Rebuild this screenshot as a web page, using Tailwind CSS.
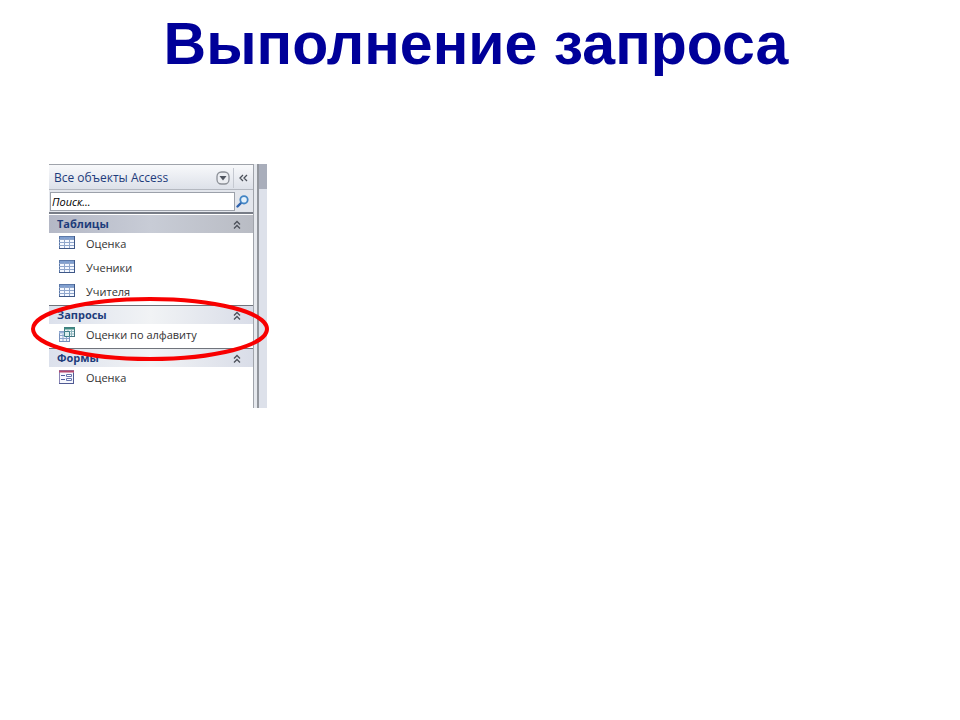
<!DOCTYPE html>
<html lang="ru">
<head>
  <meta charset="UTF-8" />
  <meta name="viewport" content="width=device-width, initial-scale=1.0" />
  <title>Выполнение запроса</title>
  <script src="https://cdn.jsdelivr.net/npm/@tailwindcss/browser@4"></script>
</head>
<body class="bg-white min-h-screen font-['Open_Sans','Noto_Sans',sans-serif]">

  <!-- Shared icons -->
  <svg class="hidden">
    <symbol id="chevrons" viewBox="0 0 8 9">
      <path d="M1 4.5 4 1.5l3 3M1 8.5l3-3 3 3" fill="none" stroke="#4b5059" stroke-width="1.3" />
    </symbol>
    <symbol id="table" viewBox="0 0 16 13">
      <rect x=".5" y=".5" width="15" height="12" fill="#f4f8ff" stroke="#5b78a8" />
      <rect x="1" y="1" width="14" height="2" fill="#7f9fd0" />
      <path d="M0 3.5h16M0 6.5h16M0 9.5h16M5.5 2v11M10.5 2v11" stroke="#8fa6cc" />
      <path d="M0 12.5h16M15.5 0v13" stroke="#3e5787" />
    </symbol>
  </svg>

  <h1 class="pt-2 pr-2 text-center text-[59px] leading-[72px] font-bold text-[#000099] font-['Liberation_Sans',sans-serif]">Выполнение запроса</h1>

  <main class="pt-[84px] pl-[49px]">
    <div class="relative flex w-[218px]">

      <!-- Navigation pane -->
      <nav class="flex-1 pb-[17px] border-t border-r border-[#a0a4ab] text-[11px] text-[#333333]">
        <div class="flex items-center h-6 pt-0.5 pl-[5px] bg-linear-to-b from-[#f8f9fb] to-[#dde1e9]">
          <span class="flex-1 text-[12px] text-[#1e3c7b] whitespace-nowrap">Все объекты Access</span>
          <button aria-label="Список" class="mr-[3px]">
            <svg class="block w-[14px] h-[14px]" viewBox="0 0 14 14">
              <rect x="1" y="1" width="12" height="12" rx="4.5" fill="#eceef2" stroke="#8c9097" stroke-width="1.3" />
              <path d="M3.5 5h7L7 9.5z" fill="#50555f" />
            </svg>
          </button>
          <button aria-label="Свернуть" class="flex items-center justify-center w-5 h-5 border-l border-[#c5c9d1]">
            <svg class="block w-[9px] h-[8px]" viewBox="0 0 9 8">
              <path d="M4 1 1 4l3 3M8 1 5 4l3 3" fill="none" stroke="#4b5059" stroke-width="1.3" />
            </svg>
          </button>
        </div>

        <form class="flex items-center h-[25px] pl-px bg-[#e3e6ec] border-t border-[#b4b8c0] border-b-2 border-b-[#787d87]">
          <input type="text" aria-label="Поиск" placeholder="Поиск..." class="flex-1 min-w-0 h-[19px] px-px bg-white border border-[#9ca1aa] italic placeholder:text-black" />
          <button type="button" aria-label="Найти" class="w-[18px] pl-px">
            <svg class="block w-[13px] h-[13px]" viewBox="0 0 13 13">
              <path d="M5 8 1.5 11.5" stroke="#2f62ad" stroke-width="2.4" stroke-linecap="round" />
              <circle cx="8" cy="4.8" r="3.7" fill="#e4f1fb" stroke="#4385c4" stroke-width="1.8" />
            </svg>
          </button>
        </form>

        <section>
          <h2 class="flex items-center justify-between h-[18px] mt-px pl-2 pr-3 font-bold text-[#1e3c7b] bg-linear-to-r from-[#b4b8c6] via-[#c8ccd6] to-[#b9bcc4]">Таблицы
            <svg class="w-2 h-[9px]"><use href="#chevrons" /></svg>
          </h2>
          <ul>
            <li><a href="#" class="flex items-center h-6 pb-0.5 pl-[10px] gap-[11px]"><svg class="w-4 h-[13px] mb-1"><use href="#table" /></svg>Оценка</a></li>
            <li><a href="#" class="flex items-center h-6 pb-0.5 pl-[10px] gap-[11px]"><svg class="w-4 h-[13px] mb-1"><use href="#table" /></svg>Ученики</a></li>
            <li><a href="#" class="flex items-center h-6 pb-0.5 pl-[10px] gap-[11px]"><svg class="w-4 h-[13px] mb-1"><use href="#table" /></svg>Учителя</a></li>
          </ul>
        </section>

        <section>
          <h2 class="flex items-center justify-between h-[19px] pl-2 pr-3 font-bold text-[#1e3c7b] border-t border-[#70747c] bg-linear-to-r from-[#dce1ec] via-[#f1f3f5] to-[#d9dde8]">Запросы
            <svg class="w-2 h-[9px]"><use href="#chevrons" /></svg>
          </h2>
          <a href="#" class="flex items-center h-6 pb-0.5 pl-[10px] gap-[11px]">
            <svg class="w-4 h-[15px] mb-0.5" viewBox="0 0 16 15">
              <rect x="5.5" y=".5" width="10" height="9" fill="#f2f8fa" stroke="#42747f" />
              <path d="M5 1.5h11" stroke="#3f8b82" stroke-width="2" />
              <path d="M6 4.5h9M6 7h9M9 3v6M12.5 3v6" stroke="#8db5bd" />
              <rect x=".5" y="4.5" width="10" height="10" fill="#f1f5fc" stroke="#7590bd" />
              <path d="M0 5.5h11" stroke="#9db4d7" stroke-width="2" />
              <path d="M1 8.5h9M1 11.5h9M4 7v7M7.5 7v7" stroke="#8fa6cc" />
              <path d="M5.5 4.5h5v5h-5z" fill="#dcefed" stroke="#3f7f88" />
            </svg>Оценки по алфавиту
          </a>
        </section>

        <section>
          <h2 class="flex items-center justify-between h-[19px] pl-2 pr-3 font-bold text-[#1e3c7b] border-t border-[#70747c] bg-linear-to-r from-[#dce1ec] via-[#f1f3f5] to-[#d9dde8]">Формы
            <svg class="w-2 h-[9px]"><use href="#chevrons" /></svg>
          </h2>
          <a href="#" class="flex items-center h-6 pb-0.5 pl-[10px] gap-[11px]">
            <svg class="w-4 h-[14px] mb-0.5" viewBox="0 0 16 14">
              <rect x=".5" y=".5" width="14" height="13" fill="#f6f7fd" stroke="#8a86b5" />
              <path d="M0 1.5h15" stroke="#b5476c" stroke-width="2" />
              <path d="M14.5 3v11M0 13.5h15" stroke="#505a93" />
              <path d="M2 5.5h4M2 9.5h4" stroke="#4f5f9e" />
              <path d="M7.5 4.5h5v2h-5zM7.5 8.5h5v2h-5z" fill="#fff" stroke="#6674ad" />
            </svg>Оценка
          </a>
        </section>
      </nav>

      <!-- Splitter and document edge -->
      <div class="w-[5px] bg-[#e6e9ee] border-r-2 border-[#92969d]"></div>
      <div class="w-2 bg-[#dde1ea]">
        <div class="h-[25px] bg-[#a9aebb]"></div>
      </div>

      <!-- Red marker around the query -->
      <svg class="absolute -left-[19px] top-[132px] w-[240px] h-[66px]" viewBox="0 0 240 66" fill="none">
        <ellipse cx="120" cy="33" rx="117" ry="30" stroke="#f80000" stroke-width="4" />
      </svg>
    </div>
  </main>

</body>
</html>
